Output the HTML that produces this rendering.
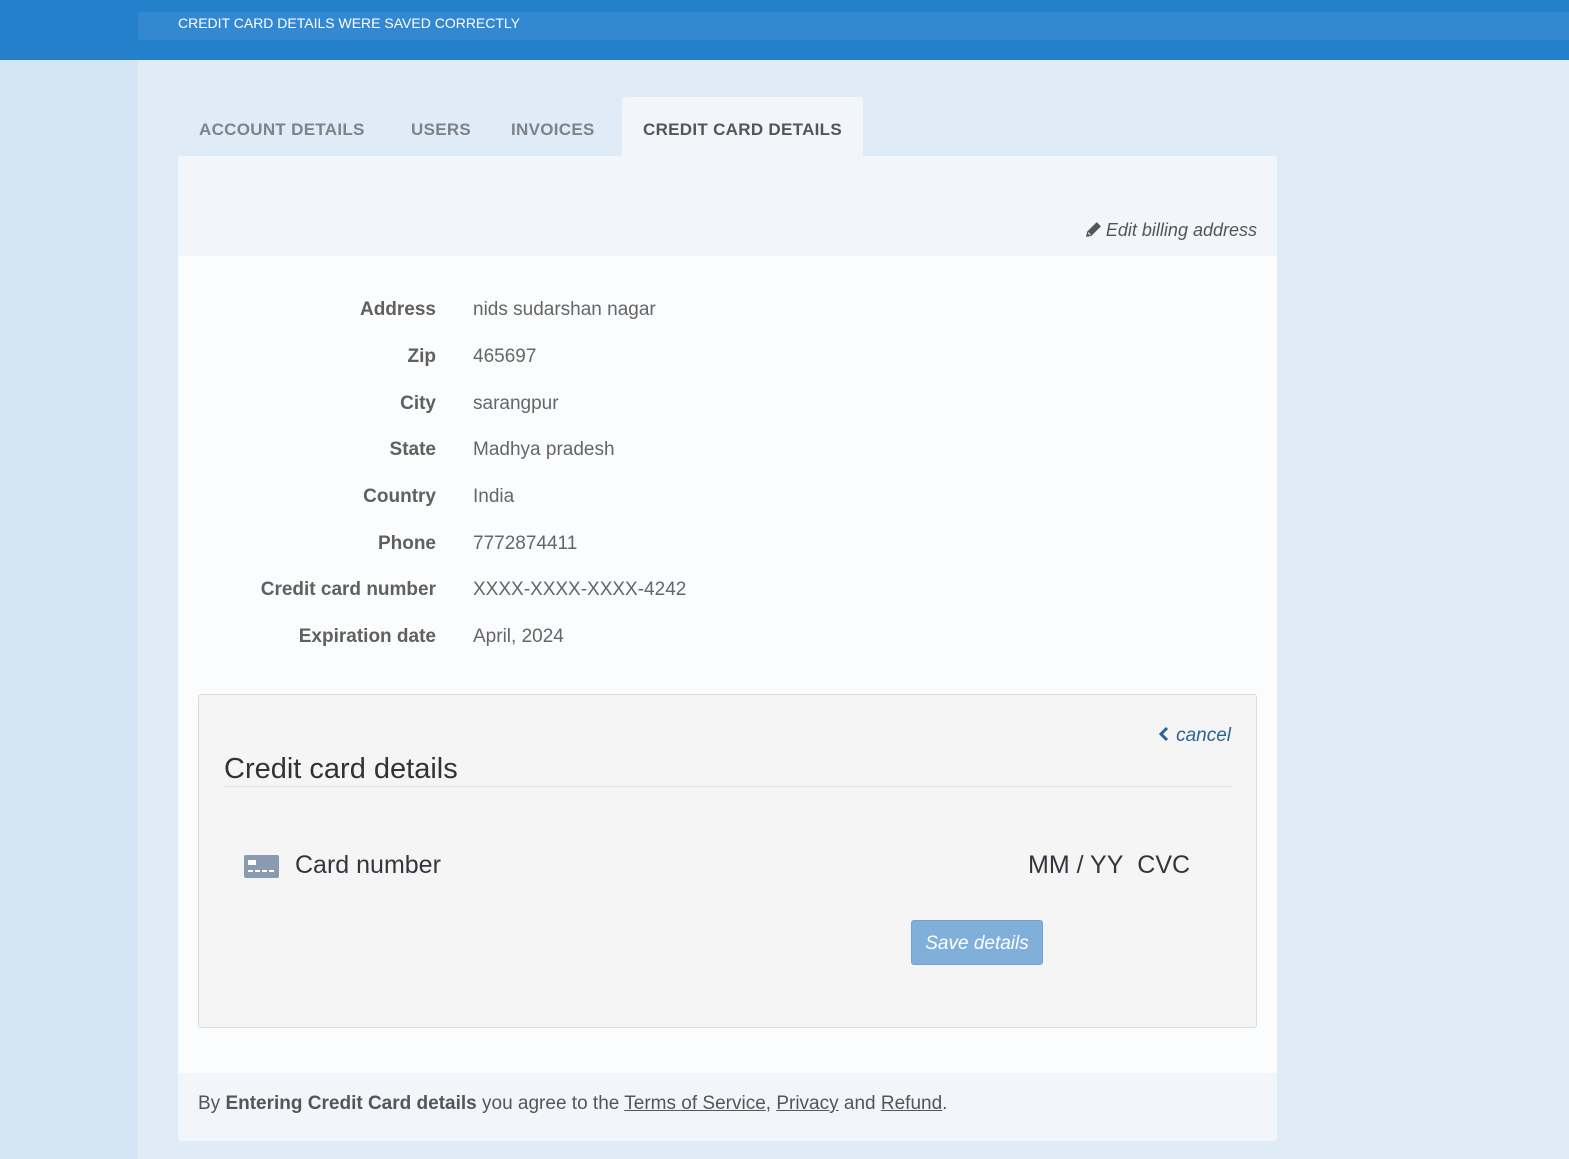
<!DOCTYPE html>
<html><head><meta charset="utf-8">
<style>
*{margin:0;padding:0;box-sizing:border-box}
body{width:1569px;height:1159px;overflow:hidden;background:#d5e5f3;font-family:"Liberation Sans",sans-serif;position:relative;color:#555}
.abs{position:absolute}
#top{left:0;top:0;width:1569px;height:60px;background:#2580cc}
#msg{left:138px;top:12px;width:1431px;height:28px;background:#3388d2;color:#fff;font-size:14px;line-height:22px;padding-left:40px}
#main{left:138px;top:60px;width:1431px;height:1099px;background:#dfebf6}
.tab{top:97px;height:59px;line-height:66px;font-size:17px;font-weight:bold;color:#7d8389;letter-spacing:.3px}
#act{left:622px;width:241px;background:#f2f6fa;color:#555;text-align:center;border-radius:4px 4px 0 0}
#card{left:178px;top:156px;width:1099px;height:985px;background:#fafcfe;border-radius:0 0 4px 4px;overflow:hidden}
#head{left:0;top:0;width:1099px;height:100px;background:#f2f6fa}
#edit{right:20px;top:64px;font-size:18px;font-style:italic;color:#555}
.lb{width:258px;text-align:right;font-weight:bold;font-size:19px;color:#606060;left:0}
.vl{left:295px;font-size:19px;color:#666}
#box{left:20px;top:538px;width:1059px;height:334px;background:#f5f5f5;border:1px solid #ddd;border-radius:3px}
#foot{left:0;top:917px;width:1099px;height:68px;background:#f2f6fa;font-size:19px;color:#555;padding:18px 20px;line-height:26px}
#foot a{color:#555;text-decoration:underline}
</style></head><body>
<div class="abs" id="top"></div>
<div class="abs" id="msg">CREDIT CARD DETAILS WERE SAVED CORRECTLY</div>
<div class="abs" id="main"></div>
<div class="abs tab" style="left:199px">ACCOUNT DETAILS</div>
<div class="abs tab" style="left:411px">USERS</div>
<div class="abs tab" style="left:511px">INVOICES</div>
<div class="abs tab" id="act">CREDIT CARD DETAILS</div>
<div class="abs" id="card">
  <div class="abs" id="head">
    <div class="abs" id="edit"><svg width="17" height="17" viewBox="0 0 16 16" style="vertical-align:-2px;margin-right:4px"><path d="M11 1l4 4-9 9-5 1 1-5z" fill="#555"/><path d="M3 11l2 2" stroke="#f2f6fa" stroke-width="1"/></svg>Edit billing address</div>
  </div>
  <div class="abs lb" style="top:143px">Address</div><div class="abs vl" style="top:143px">nids sudarshan nagar</div>
  <div class="abs lb" style="top:190px">Zip</div><div class="abs vl" style="top:190px">465697</div>
  <div class="abs lb" style="top:237px">City</div><div class="abs vl" style="top:237px">sarangpur</div>
  <div class="abs lb" style="top:283px">State</div><div class="abs vl" style="top:283px">Madhya pradesh</div>
  <div class="abs lb" style="top:330px">Country</div><div class="abs vl" style="top:330px">India</div>
  <div class="abs lb" style="top:377px">Phone</div><div class="abs vl" style="top:377px">7772874411</div>
  <div class="abs lb" style="top:423px">Credit card number</div><div class="abs vl" style="top:423px">XXXX-XXXX-XXXX-4242</div>
  <div class="abs lb" style="top:470px">Expiration date</div><div class="abs vl" style="top:470px">April, 2024</div>
  <div class="abs" id="box">
    <div class="abs" style="right:25px;top:30px;font-size:19px;font-style:italic;color:#2a6496"><svg width="12" height="16" viewBox="0 0 12 16" style="vertical-align:-1px;margin-right:6px"><path d="M9 2L3 8l6 6" stroke="#2a6496" stroke-width="3" fill="none"/></svg>cancel</div>
    <div class="abs" style="left:25px;top:58px;font-size:29px;color:#333">Credit card details</div>
    <div class="abs" style="left:25px;top:91px;width:1008px;height:1px;background:#e2e2e2"></div>
    <svg class="abs" style="left:45px;top:160px" width="35" height="23" viewBox="0 0 35 23"><rect width="35" height="23" rx="2" fill="#8a9bb1"/><rect x="4" y="5" width="8" height="5" fill="#fff"/><path d="M4 16h5M11 16h5M18 16h5M25 16h5" stroke="#fff" stroke-width="2"/></svg>
    <div class="abs" style="left:96px;top:156px;font-size:25px;color:#32373e">Card number</div>
    <div class="abs" style="left:829px;top:156px;font-size:25px;color:#32373e">MM / YY&nbsp;&nbsp;CVC</div>
    <div class="abs" style="left:712px;top:225px;width:132px;height:45px;background:#80b0d9;border:1px solid #6fa4d2;border-radius:3px;color:#fff;font-size:19px;font-style:italic;text-align:center;line-height:45px">Save details</div>
  </div>
  <div class="abs" id="foot">By <b>Entering Credit Card details</b> you agree to the <a>Terms of Service</a>, <a>Privacy</a> and <a>Refund</a>.</div>
</div>
</body></html>
